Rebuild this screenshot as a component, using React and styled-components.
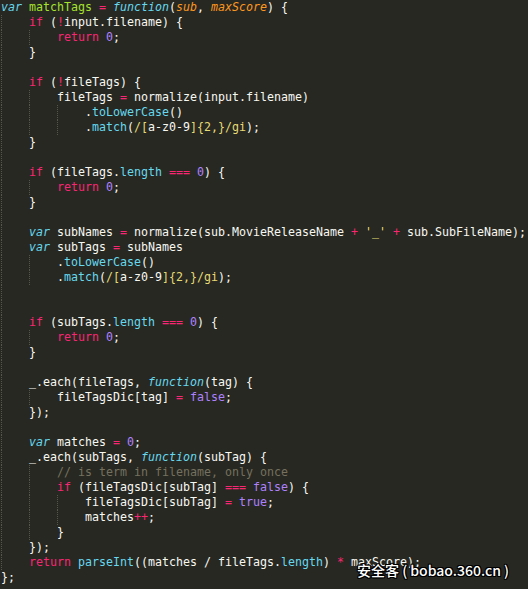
import React from 'react';
import styled, { createGlobalStyle } from 'styled-components';

const Global = createGlobalStyle`
  html, body { margin: 0; padding: 0; background: #272822; }
  #root { width: 528px; height: 589px; }
`;

const COLORS = {
  k: '#F92672',
  s: '#66D9EF',
  u: '#66D9EF',
  f: '#A6E22E',
  p: '#FD971F',
  n: '#AE81FF',
  y: '#E6DB74',
  c: '#75715E',
};

const Editor = styled.div`
  position: relative;
  width: 528px;
  height: 589px;
  overflow: hidden;
  background: #272822;
  padding-left: 1px;
  box-sizing: border-box;
  font-family: "DejaVu Sans Mono", "Liberation Mono", monospace;
  font-size: 11.63px;
  color: #F8F8F2;
`;

const Line = styled.div`
  height: 15px;
  line-height: 15px;
  white-space: pre;
  display: flex;
  align-items: stretch;
`;

const Guide = styled.span`
  display: inline-block;
  width: 28px;
  height: 15px;
  flex: none;
  box-sizing: border-box;
  border-left: 1px dotted #56564f;
`;

const Code = styled.span`
  white-space: pre;
`;

const Tok = styled.span`
  color: ${(p) => COLORS[p.$t]};
  font-style: ${(p) => (p.$t === 's' || p.$t === 'p' ? 'italic' : 'normal')};
`;

const Watermark = styled.div`
  position: absolute;
  left: 357px;
  top: 560px;
  font-family: "Noto Sans CJK SC", "Noto Sans", sans-serif;
  font-size: 14px;
  font-weight: 500;
  line-height: 20px;
  color: #ffffff;
  white-space: pre;
  text-shadow: 1px 0 0 #000, -1px 0 0 #000, 0 1px 0 #000, 0 -1px 0 #000,
    1px 1px 0 #000, -1px -1px 0 #000, 1px -1px 0 #000, -1px 1px 0 #000;
`;

const RE = [['y', '/'], ['y', '['], 'a-z0-9', ['y', ']'], ['y', '{2,}'], ['y', '/gi']];
const RET0 = [['k', 'return'], ' ', ['n', '0'], ';'];

const LINES = [
  [0, [['s', 'var'], ' ', ['f', 'matchTags'], ' ', ['k', '='], ' ', ['s', 'function'], '(', ['p', 'sub'], ', ', ['p', 'maxScore'], ') {']],
  [1, [['k', 'if'], ' (', ['k', '!'], 'input.filename) {']],
  [2, RET0],
  [1, ['}']],
  [1, []],
  [1, [['k', 'if'], ' (', ['k', '!'], 'fileTags) {']],
  [2, ['fileTags ', ['k', '='], ' normalize(input.filename)']],
  [3, ['.', ['u', 'toLowerCase'], '()']],
  [3, ['.', ['u', 'match'], '(', ...RE, ');']],
  [1, ['}']],
  [1, []],
  [1, [['k', 'if'], ' (fileTags.', ['u', 'length'], ' ', ['k', '==='], ' ', ['n', '0'], ') {']],
  [2, RET0],
  [1, ['}']],
  [1, []],
  [1, [['s', 'var'], ' subNames ', ['k', '='], ' normalize(sub.MovieReleaseName ', ['k', '+'], ' ', ['y', "'_'"], ' ', ['k', '+'], ' sub.SubFileName);']],
  [1, [['s', 'var'], ' subTags ', ['k', '='], ' subNames']],
  [2, ['.', ['u', 'toLowerCase'], '()']],
  [2, ['.', ['u', 'match'], '(', ...RE, ');']],
  [1, []],
  [1, []],
  [1, [['k', 'if'], ' (subTags.', ['u', 'length'], ' ', ['k', '==='], ' ', ['n', '0'], ') {']],
  [2, RET0],
  [1, ['}']],
  [1, []],
  [1, ['_.each(fileTags, ', ['s', 'function'], '(tag) {']],
  [2, ['fileTagsDic[tag] ', ['k', '='], ' ', ['n', 'false'], ';']],
  [1, ['});']],
  [1, []],
  [1, [['s', 'var'], ' matches ', ['k', '='], ' ', ['n', '0'], ';']],
  [1, ['_.each(subTags, ', ['s', 'function'], '(subTag) {']],
  [2, [['c', '// is term in filename, only once']]],
  [2, [['k', 'if'], ' (fileTagsDic[subTag] ', ['k', '==='], ' ', ['n', 'false'], ') {']],
  [3, ['fileTagsDic[subTag] ', ['k', '='], ' ', ['n', 'true'], ';']],
  [3, ['matches', ['k', '++'], ';']],
  [2, ['}']],
  [1, ['});']],
  [1, [['k', 'return'], ' ', ['u', 'parseInt'], '((matches / fileTags.', ['u', 'length'], ') ', ['k', '*'], ' maxScore);']],
  [0, ['};']],
];

export default function App() {
  return (
    <>
      <Global />
      <Editor>
        {LINES.map(([indent, toks], i) => (
          <Line key={i}>
            {Array.from({ length: indent }).map((_, g) => (
              <Guide key={g} />
            ))}
            <Code>
              {toks.map((t, j) =>
                typeof t === 'string' ? (
                  <React.Fragment key={j}>{t}</React.Fragment>
                ) : (
                  <Tok key={j} $t={t[0]}>
                    {t[1]}
                  </Tok>
                )
              )}
            </Code>
          </Line>
        ))}
        <Watermark>安全客 ( bobao.360.cn )</Watermark>
      </Editor>
    </>
  );
}
